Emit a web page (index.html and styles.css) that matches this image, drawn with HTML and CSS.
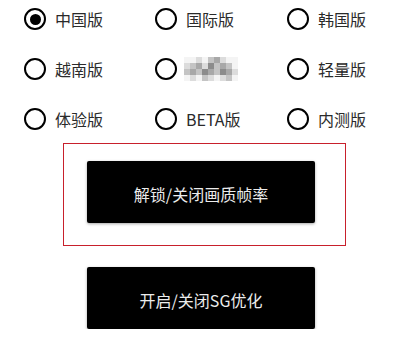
FILE: index.html
```html
<!DOCTYPE html>
<html lang="zh">
<head>
<meta charset="utf-8">
<link rel="stylesheet" href="styles.css">
</head>
<body>
<div class="options">
  <div class="opt"><span class="radio checked"></span><span class="label">中国版</span></div>
  <div class="opt"><span class="radio"></span><span class="label">国际版</span></div>
  <div class="opt"><span class="radio"></span><span class="label">韩国版</span></div>
  <div class="opt"><span class="radio"></span><span class="label">越南版</span></div>
  <div class="opt"><span class="radio"></span><span class="mosaic">
    <i class="c0"></i><i class="c0"></i><i class="c1"></i><i class="c0"></i><i class="c2"></i><i class="c3"></i><i class="c1"></i><i class="c0"></i><i class="c0"></i>
    <i class="c1"></i><i class="c2"></i><i class="c3"></i><i class="c1"></i><i class="c4"></i><i class="c2"></i><i class="c3"></i><i class="c2"></i><i class="c0"></i>
    <i class="c2"></i><i class="c3"></i><i class="c2"></i><i class="c4"></i><i class="c3"></i><i class="c2"></i><i class="c4"></i><i class="c3"></i><i class="c1"></i>
    <i class="c0"></i><i class="c1"></i><i class="c0"></i><i class="c2"></i><i class="c1"></i><i class="c0"></i><i class="c1"></i><i class="c2"></i><i class="c0"></i>
  </span></div>
  <div class="opt"><span class="radio"></span><span class="label">轻量版</span></div>
  <div class="opt"><span class="radio"></span><span class="label">体验版</span></div>
  <div class="opt"><span class="radio"></span><span class="label">BETA版</span></div>
  <div class="opt"><span class="radio"></span><span class="label">内测版</span></div>
</div>
<div class="highlight">
  <div class="btn">解锁/关闭画质帧率</div>
</div>
<div class="btn btn-second">开启/关闭SG优化</div>
</body>
</html>
```
FILE: styles.css
```css
html, body {
  margin: 0;
  padding: 0;
  background: #ffffff;
  font-family: "Noto Sans CJK SC", "Noto Sans", sans-serif;
}

.options {
  display: grid;
  grid-template-columns: 131px 132px auto;
  grid-auto-rows: 22px;
  row-gap: 28px;
  padding: 8px 0 0 24px;
}

.opt {
  display: flex;
  align-items: center;
}

.radio {
  box-sizing: border-box;
  width: 22px;
  height: 22px;
  border: 2.5px solid #000;
  border-radius: 50%;
  display: flex;
  align-items: center;
  justify-content: center;
  flex: none;
}

.radio.checked::after {
  content: "";
  width: 11px;
  height: 11px;
  border-radius: 50%;
  background: #000;
}

.label {
  margin-left: 9px;
  font-size: 16px;
  line-height: 22px;
  color: #2a2a2a;
}

.mosaic {
  margin-left: 7px;
  display: grid;
  grid-template-columns: repeat(9, 6px);
  grid-auto-rows: 6px;
  filter: blur(0.5px);
}

.mosaic i { display: block; }
.mosaic .c0 { background: #f4f4f4; }
.mosaic .c1 { background: #dcdcdc; }
.mosaic .c2 { background: #c4c4c4; }
.mosaic .c3 { background: #a8a8a8; }
.mosaic .c4 { background: #8c8c8c; }

.highlight {
  box-sizing: border-box;
  width: 283px;
  height: 103px;
  margin: 13px 0 0 63px;
  border: 1px solid #c8202c;
  padding: 17px 0 0 23px;
}

.btn {
  box-sizing: border-box;
  width: 228px;
  height: 62px;
  background: #000;
  border-radius: 2px;
  box-shadow: 0 1px 3px rgba(0, 0, 0, 0.35);
  color: #ececec;
  font-size: 16px;
  display: flex;
  align-items: center;
  justify-content: center;
  padding-top: 3px;
}

.btn-second {
  margin: 21px 0 0 87px;
}
```
